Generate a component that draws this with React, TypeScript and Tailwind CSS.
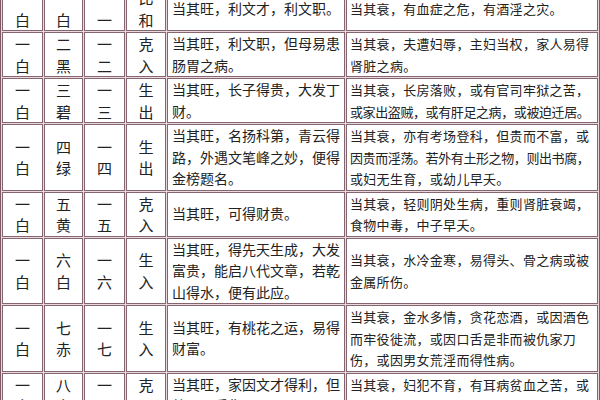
type Row = {
  a: [string, string];
  b: [string, string];
  c: [string, string];
  d: [string, string];
  wang: string[];
  shuai: string[];
};

const rows: Row[] = [
  {
    a: ['一', '白'],
    b: ['一', '白'],
    c: ['一', '一'],
    d: ['比', '和'],
    wang: ['当其旺，利文才，利文职。'],
    shuai: ['当其衰，有血症之危，有酒淫之灾。'],
  },
  {
    a: ['一', '白'],
    b: ['二', '黑'],
    c: ['一', '二'],
    d: ['克', '入'],
    wang: ['当其旺，利文职，但母易患', '肠胃之病。'],
    shuai: ['当其衰，夫遭妇辱，主妇当权，家人易得', '肾脏之病。'],
  },
  {
    a: ['一', '白'],
    b: ['三', '碧'],
    c: ['一', '三'],
    d: ['生', '出'],
    wang: ['当其旺，长子得贵，大发丁', '财。'],
    shuai: ['当其衰，长房落败，或有官司牢狱之苦，', '或家出盗贼，或有肝足之病，或被迫迁居。'],
  },
  {
    a: ['一', '白'],
    b: ['四', '绿'],
    c: ['一', '四'],
    d: ['生', '出'],
    wang: ['当其旺，名扬科第，青云得', '路，外遇文笔峰之妙，便得', '金榜题名。'],
    shuai: [
      '当其衰，亦有考场登科，但贵而不富，或',
      '因贵而淫荡。若外有土形之物，则出书腐，',
      '或妇无生育，或幼儿早夭。',
    ],
  },
  {
    a: ['一', '白'],
    b: ['五', '黄'],
    c: ['一', '五'],
    d: ['克', '入'],
    wang: ['当其旺，可得财贵。'],
    shuai: ['当其衰，轻则阴处生病，重则肾脏衰竭，', '食物中毒，中子早夭。'],
  },
  {
    a: ['一', '白'],
    b: ['六', '白'],
    c: ['一', '六'],
    d: ['生', '入'],
    wang: ['当其旺，得先天生成，大发', '富贵，能启八代文章，若乾', '山得水，便有此应。'],
    shuai: ['当其衰，水冷金寒，易得头、骨之病或被', '金属所伤。'],
  },
  {
    a: ['一', '白'],
    b: ['七', '赤'],
    c: ['一', '七'],
    d: ['生', '入'],
    wang: ['当其旺，有桃花之运，易得', '财富。'],
    shuai: [
      '当其衰，金水多情，贪花恋酒，或因酒色',
      '而牢役徙流，或因口舌是非而被仇家刀',
      '伤，或因男女荒淫而得性病。',
    ],
  },
  {
    a: ['一', '白'],
    b: ['八', '白'],
    c: ['一', '八'],
    d: ['克', '入'],
    wang: ['当其旺，家因文才得利，但', '幼子易受伤。'],
    shuai: ['当其衰，妇犯不育，有耳病贫血之苦，或', '少男受损。'],
  },
];

const cell = 'border border-[#85656f] bg-white flex flex-col justify-center text-[#222]';

function Stack({ lines }: { lines: [string, string] }) {
  return (
    <div className={`${cell} items-center text-[15px] leading-[21.5px]`}>
      <span>{lines[0]}</span>
      <span>{lines[1]}</span>
    </div>
  );
}

export default function App() {
  return (
    <div
      className="w-[600px] h-[400px] overflow-hidden bg-white"
      style={{ fontFamily: '"Noto Sans CJK SC", "Noto Sans", sans-serif' }}
    >
      <div className="mt-[-16px] grid grid-cols-[41px_39px_41px_40px_178px_252px] gap-px p-px border border-[#7a5b65] bg-[#e9d8dc]">
        {rows.map((r, i) => (
          <div key={i} className="contents">
            <Stack lines={r.a} />
            <Stack lines={r.b} />
            <Stack lines={r.c} />
            <Stack lines={r.d} />
            <div className={`${cell} pl-[4px] text-[14px] leading-[21.5px] whitespace-nowrap`}>
              {r.wang.map((l, j) => (
                <span key={j}>{l}</span>
              ))}
            </div>
            <div className={`${cell} pl-[3px] text-[13px] leading-[21.5px] whitespace-nowrap overflow-hidden`}>
              {r.shuai.map((l, j) => (
                <span key={j} className={l.length >= 19 ? 'tracking-[-0.4px]' : 'tracking-[0.3px]'}>
                  {l}
                </span>
              ))}
            </div>
          </div>
        ))}
      </div>
    </div>
  );
}
